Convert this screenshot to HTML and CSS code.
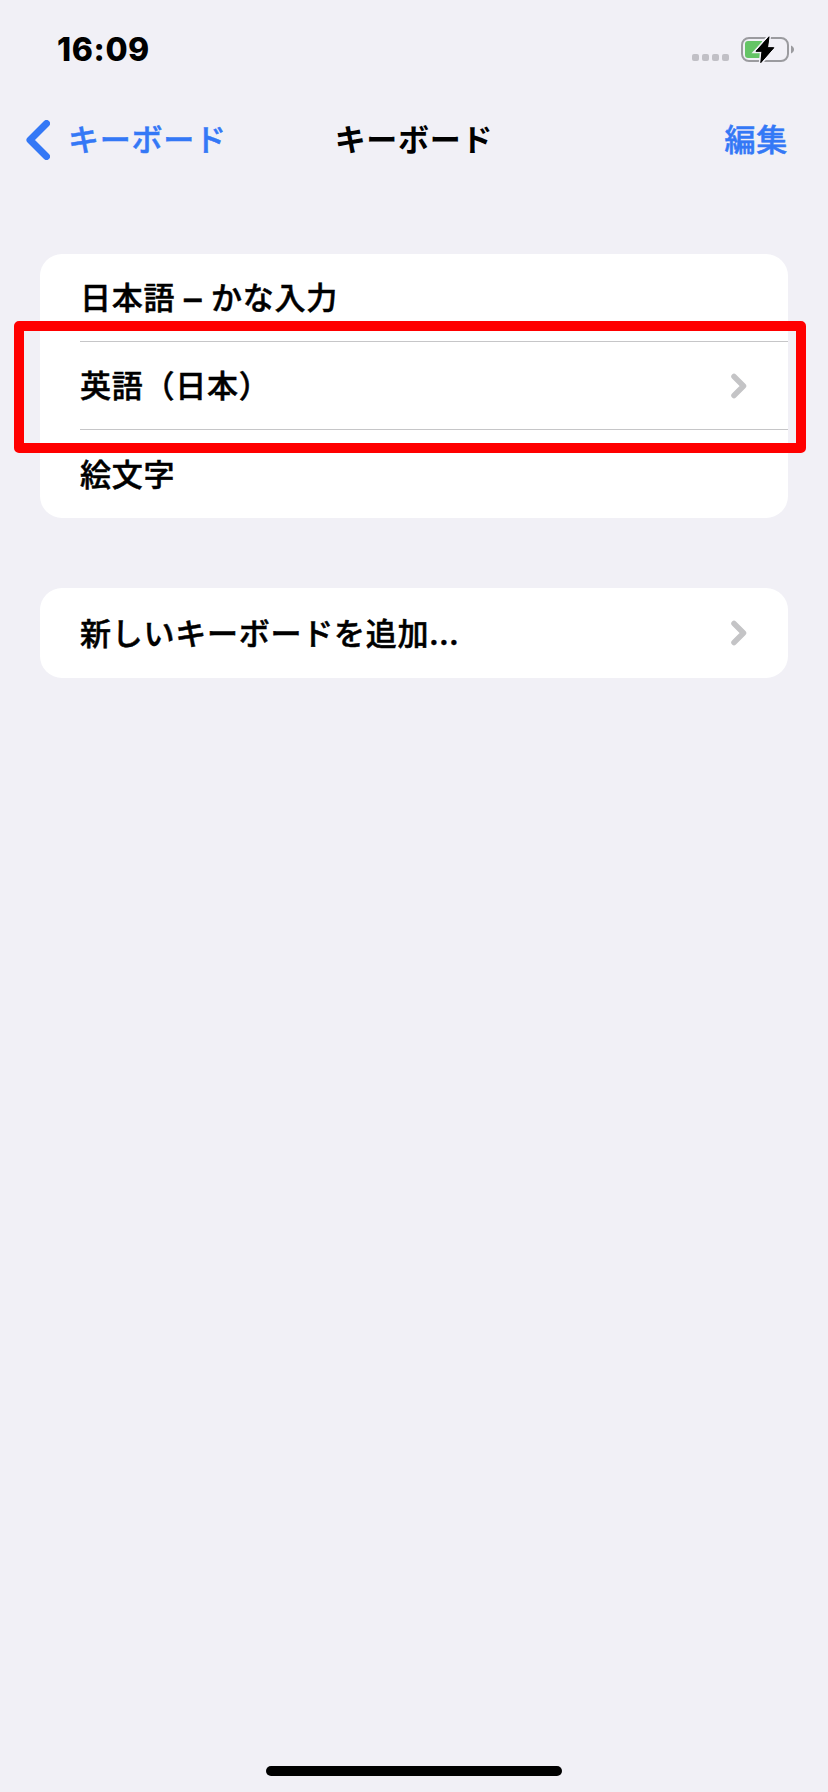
FILE: index.html
```html
<!DOCTYPE html>
<html lang="ja">
<head>
    <meta charset="UTF-8">
    <meta name="viewport" content="width=device-width, initial-scale=1.0">
    <title>キーボード</title>
    <link rel="stylesheet" href="styles.css">
</head>
<body>
    <div class="screen">
        <div class="status-bar">
            <div class="time">16:09</div>
            <div class="indicators">
                <div class="signal">
                    <span></span><span></span><span></span><span></span>
                </div>
                <svg class="battery" width="54" height="28" viewBox="0 0 54 28">
                    <rect x="1" y="2" width="46" height="23" rx="7" fill="none" stroke="#9b9b9f" stroke-width="2"/>
                    <path d="M50 9.500c4 1.500 4 6.500 0 8z" fill="#9b9b9f"/>
                    <path d="M7 5H21v17H7A3 3 0 0 1 4 19V8A3 3 0 0 1 7 5z" fill="#65c466"/>
                    <path d="M28 .8L15 15.300h6L19.800 26.600 32.800 11.700H26.500z" fill="#000" stroke="#f1f0f6" stroke-width="4" paint-order="stroke"/>
                    <path d="M28 .8L15 15.300h6L19.800 26.600 32.800 11.700H26.500z" fill="#000" stroke="#000" stroke-linejoin="round"/>
                </svg>
            </div>
        </div>

        <div class="nav-bar">
            <div class="back">
                <svg width="24" height="40" viewBox="0 0 24 40"><path d="M20.500 3.500L4 20l16.500 16.500" fill="none" stroke="#3478f6" stroke-width="7" stroke-linecap="round" stroke-linejoin="round"/></svg>
                <span class="label">キーボード</span>
            </div>
            <h1 class="label">キーボード</h1>
            <div class="edit label">編集</div>
        </div>

        <div class="list">
            <div class="row"><div class="row-inner"><span class="label">日本語 <span class="dash">–</span> かな入力</span></div></div>
            <div class="row highlight">
                <div class="row-inner">
                    <span class="label">英語（日本）</span>
                    <svg class="chevron" width="16" height="26" viewBox="0 0 16 26"><path d="M3 3.500l9.500 9.500L3 22.500" fill="none" stroke="#c4c4c6" stroke-width="5.500" stroke-linecap="round" stroke-linejoin="round"/></svg>
                </div>
                <div class="marker"></div>
            </div>
            <div class="row"><div class="row-inner"><span class="label">絵文字</span></div></div>
        </div>

        <div class="list">
            <div class="row tall">
                <div class="row-inner">
                    <span class="label">新しいキーボードを追加...</span>
                    <svg class="chevron" width="16" height="26" viewBox="0 0 16 26"><path d="M3 3.500l9.500 9.500L3 22.500" fill="none" stroke="#c4c4c6" stroke-width="5.500" stroke-linecap="round" stroke-linejoin="round"/></svg>
                </div>
            </div>
        </div>

        <div class="home-indicator"></div>
    </div>
</body>
</html>
```
FILE: styles.css
```css
* {
    margin: 0;
    padding: 0;
    box-sizing: border-box;
}

body {
    background: #f1f0f6;
    color: #000;
    font-family: 'Noto Sans CJK JP', sans-serif;
    font-size: 31px;
    font-weight: 500;
    letter-spacing: 0.75px;
}

.screen {
    width: 828px;
    height: 1792px;
    display: flex;
    flex-direction: column;
}

.status-bar {
    height: 96px;
    padding: 0 33px 0 57px;
    display: flex;
    align-items: center;
    justify-content: space-between;
}

.time {
    font-family: Inter, sans-serif;
    font-size: 32px;
    font-weight: 800;
    line-height: 40px;
    letter-spacing: 0.6px;
    padding-top: 4px;
}

.indicators {
    display: flex;
    align-items: center;
    gap: 12px;
    padding-top: 3px;
}

.signal {
    display: flex;
    gap: 3px;
    padding-top: 16px;
}

.signal span {
    width: 7px;
    height: 7px;
    border-radius: 2px;
    background: #c1c0c6;
}

.label {
    padding-bottom: 3px;
    -webkit-text-stroke: 0.5px currentColor;
}

.nav-bar {
    height: 88px;
    padding: 0 26px;
    display: grid;
    grid-template-columns: 1fr auto 1fr;
    align-items: center;
    line-height: 40px;
}

.nav-bar .label {
    padding-bottom: 5px;
}

.back {
    display: flex;
    align-items: center;
    gap: 18px;
    color: #3478f6;
}

.nav-bar h1 {
    font-size: 31px;
    font-weight: 700;
    -webkit-text-stroke: 0;
}

.edit {
    margin-right: 14px;
    color: #3478f6;
    text-align: right;
}

.list {
    margin: 70px 40px 0;
    background: #fff;
    border-radius: 22px;
}

.row {
    height: 88px;
    padding-left: 40px;
}

.row-inner {
    height: 100%;
    padding-right: 41px;
    display: flex;
    align-items: center;
    justify-content: space-between;
    line-height: 40px;
}

.row:not(:last-child) .row-inner {
    border-bottom: 1px solid #c6c6c8;
}

.row.tall {
    height: 90px;
}

.dash {
    margin: 0 1px;
    font-family: Inter, sans-serif;
    font-size: 35px;
    line-height: 0;
    vertical-align: -2px;
}

.highlight {
    position: relative;
}

/* red frame around the selected row */
.marker {
    position: absolute;
    top: -21px;
    left: -26px;
    width: 792px;
    height: 132px;
    border: 10px solid #f00;
    border-radius: 5px;
}

.home-indicator {
    width: 296px;
    height: 10px;
    margin: auto auto 16px;
    border-radius: 5px;
    background: #000;
}
```
